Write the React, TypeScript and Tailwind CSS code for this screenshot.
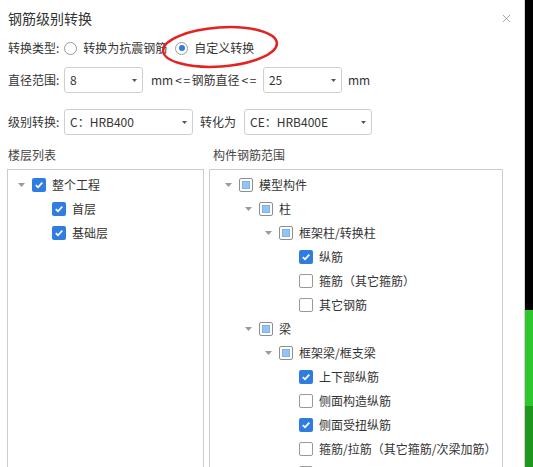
import { X } from 'lucide-react'

type CheckState = 'checked' | 'unchecked' | 'partial'

interface TreeRow {
  label: string
  level: number
  state: CheckState
  expandable?: boolean
}

const floorRows: TreeRow[] = [
  { label: '整个工程', level: 0, state: 'checked', expandable: true },
  { label: '首层', level: 1, state: 'checked' },
  { label: '基础层', level: 1, state: 'checked' },
]

const rebarRows: TreeRow[] = [
  { label: '模型构件', level: 0, state: 'partial', expandable: true },
  { label: '柱', level: 1, state: 'partial', expandable: true },
  { label: '框架柱/转换柱', level: 2, state: 'partial', expandable: true },
  { label: '纵筋', level: 3, state: 'checked' },
  { label: '箍筋（其它箍筋）', level: 3, state: 'unchecked' },
  { label: '其它钢筋', level: 3, state: 'unchecked' },
  { label: '梁', level: 1, state: 'partial', expandable: true },
  { label: '框架梁/框支梁', level: 2, state: 'partial', expandable: true },
  { label: '上下部纵筋', level: 3, state: 'checked' },
  { label: '侧面构造纵筋', level: 3, state: 'unchecked' },
  { label: '侧面受扭纵筋', level: 3, state: 'checked' },
  { label: '箍筋/拉筋（其它箍筋/次梁加筋）', level: 3, state: 'unchecked' },
  { label: '其它钢筋', level: 3, state: 'unchecked' },
]

function Checkbox({ state }: { state: CheckState }) {
  if (state === 'checked') {
    return (
      <span className="flex w-[14px] h-[14px] shrink-0 items-center justify-center rounded-[2px] bg-[#2f7de0]">
        <svg width="10" height="10" viewBox="0 0 10 10">
          <path d="M1.8 5.2 L4 7.3 L8.3 2.6" fill="none" stroke="white" strokeWidth="1.8" />
        </svg>
      </span>
    )
  }
  if (state === 'partial') {
    return (
      <span className="flex w-[14px] h-[14px] shrink-0 items-center justify-center rounded-[2px] border border-[#8f8f8f] bg-white">
        <span className="w-[8px] h-[8px] bg-[#95c5f6] border border-[#7cb2ea]" />
      </span>
    )
  }
  return <span className="block w-[14px] h-[14px] shrink-0 rounded-[2px] border border-[#9a9a9a] bg-white" />
}

function Caret() {
  return (
    <svg width="7" height="4" viewBox="0 0 7 4">
      <path d="M0 0 L7 0 L3.5 4 Z" fill="#9a9a9a" />
    </svg>
  )
}

function Tree({ rows, base }: { rows: TreeRow[]; base: number }) {
  return (
    <div className="flex flex-col pt-[3px]">
      {rows.map((row, i) => (
        <div
          key={i}
          className="flex h-6 shrink-0 items-center"
          style={{ paddingLeft: base + row.level * 20 }}
        >
          <span className="flex w-4 justify-center">{row.expandable && <Caret />}</span>
          <span className="ml-[3px] flex">
            <Checkbox state={row.state} />
          </span>
          <span className="ml-[6px] whitespace-nowrap text-[12px] text-[#333]">{row.label}</span>
        </div>
      ))}
    </div>
  )
}

function Select({ value, width }: { value: string; width: string }) {
  return (
    <div
      className={`flex h-[26px] ${width} items-center justify-between rounded-[3px] border border-[#cfcfcf] bg-white pl-[5px] pr-[5px]`}
    >
      <span className="text-[12px] text-[#333]">{value}</span>
      <svg width="5" height="3" viewBox="0 0 5 3">
        <path d="M0 0 L5 0 L2.5 3 Z" fill="#555" />
      </svg>
    </div>
  )
}

function Radio({ selected }: { selected?: boolean }) {
  return (
    <span className="flex w-[13px] h-[13px] items-center justify-center rounded-full border border-[#9a9a9a] bg-white">
      {selected && <span className="w-[6px] h-[6px] rounded-full bg-[#2f7de0]" />}
    </span>
  )
}

export default function App() {
  return (
    <div
      className="flex w-[533px] h-[467px] overflow-hidden bg-white"
      style={{ fontFamily: '"Noto Sans CJK SC", "Liberation Sans", sans-serif' }}
    >
      {/* Dialog */}
      <div className="relative flex w-[525px] flex-col overflow-hidden border-r border-[#d4d4d4] bg-white pl-[7px]">
        {/* Title */}
        <div className="flex h-9 shrink-0 items-center justify-between pr-[11px]">
          <span className="pl-[1px] text-[14px] text-[#333]">钢筋级别转换</span>
          <X className="w-[13px] h-[13px] text-[#808080]" strokeWidth={1.3} />
        </div>

        {/* Type */}
        <div className="flex h-6 shrink-0 items-center text-[12px] text-[#333]">
          <span className="pl-[1px]">转换类型:</span>
          <span className="ml-[5px] flex items-center">
            <Radio />
            <span className="ml-[6px]">转换为抗震钢筋</span>
          </span>
          <span className="ml-[8px] flex items-center">
            <Radio selected />
            <span className="ml-[6px]">自定义转换</span>
          </span>
        </div>

        {/* Diameter range */}
        <div className="mt-[7px] flex h-[26px] shrink-0 items-center text-[12px] text-[#333]">
          <span className="w-[57px] pl-[1px]">直径范围:</span>
          <Select value="8" width="w-[79px]" />
          <span className="ml-[8px]">
            mm<span className="tracking-[1.5px] pl-[2px]">&lt;=</span>钢筋直径
            <span className="tracking-[1.5px] pl-[2px]">&lt;=</span>
          </span>
          <span className="ml-[5px]">
            <Select value="25" width="w-[79px]" />
          </span>
          <span className="ml-[6px]">mm</span>
        </div>

        {/* Grade */}
        <div className="mt-[16px] flex h-[26px] shrink-0 items-center text-[12px] text-[#333]">
          <span className="w-[57px] pl-[1px]">级别转换:</span>
          <Select value="C：HRB400" width="w-[129px]" />
          <span className="ml-[7px]">转化为</span>
          <span className="ml-[8px]">
            <Select value="CE：HRB400E" width="w-[128px]" />
          </span>
        </div>

        {/* Section labels */}
        <div className="mt-[10px] flex h-5 shrink-0 items-center text-[12px] text-[#444]">
          <span className="w-[206px] pl-[1px]">楼层列表</span>
          <span>构件钢筋范围</span>
        </div>

        {/* Panels */}
        <div className="mt-[4px] flex shrink-0 gap-[5px]">
          <div className="w-[197px] h-[320px] border border-[#cccccc]">
            <Tree rows={floorRows} base={5} />
          </div>
          <div className="w-[294px] h-[320px] overflow-hidden border border-[#cccccc]">
            <Tree rows={rebarRows} base={10} />
          </div>
        </div>

        {/* Annotation ellipse */}
        <svg className="pointer-events-none absolute left-0 top-0" width="525" height="100">
          <ellipse
            cx="220"
            cy="47"
            rx="57"
            ry="19.5"
            transform="rotate(-4 220 47)"
            fill="none"
            stroke="#e32222"
            strokeWidth="2.5"
          />
        </svg>
      </div>

      {/* Right strip */}
      <div className="flex w-[8px] flex-col">
        <div className="h-[310px] bg-black" />
        <div className="h-[96px] bg-[#2ec72e]" />
        <div className="flex-1 bg-[#1f971f]" />
      </div>
    </div>
  )
}
